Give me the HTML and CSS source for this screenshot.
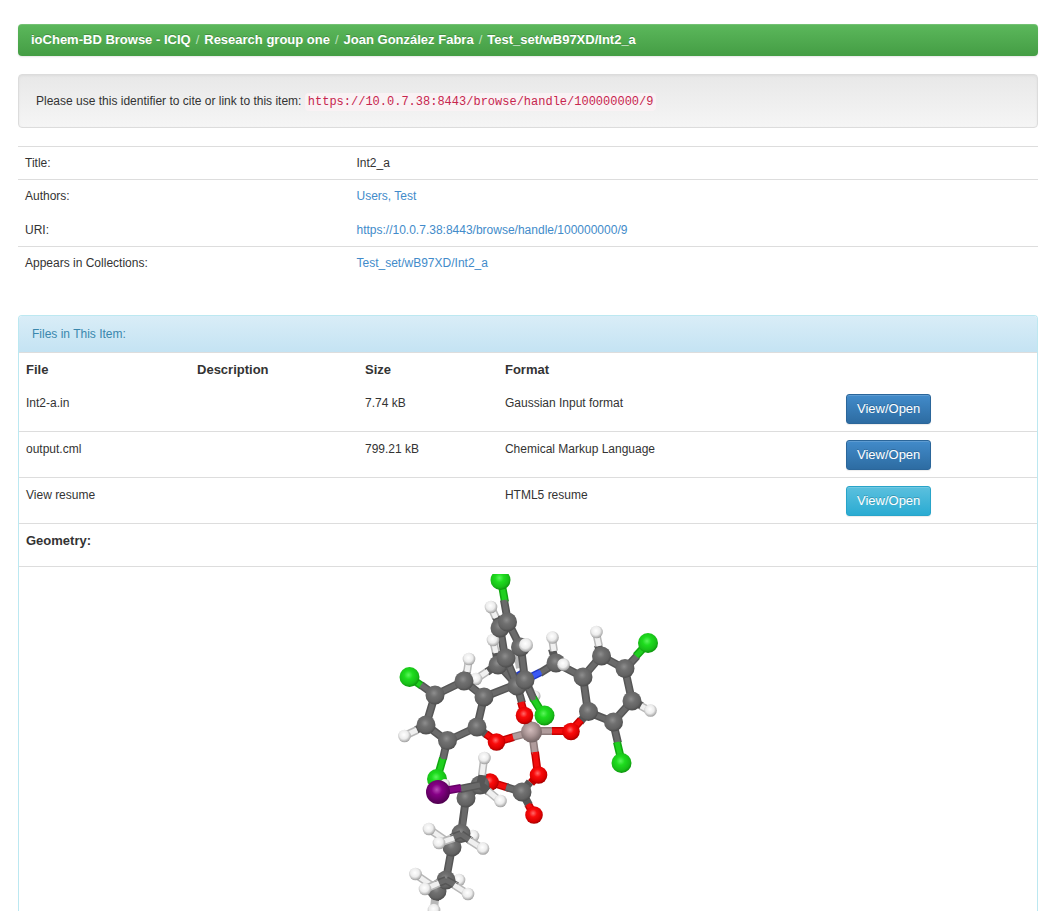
FILE: index.html
```html
<!DOCTYPE html>
<html lang="en">
<head>
<meta charset="utf-8">
<title>ioChem-BD Browse - Int2_a</title>
<link rel="stylesheet" href="styles.css">
</head>
<body>
<main class="page">
  <nav aria-label="Breadcrumb">
    <ol class="breadcrumb">
      <li><a href="#">ioChem-BD Browse - ICIQ</a></li>
      <li><a href="#">Research group one</a></li>
      <li><a href="#">Joan González Fabra</a></li>
      <li><a href="#">Test_set/wB97XD/Int2_a</a></li>
    </ol>
  </nav>

  <div class="well">Please use this identifier to cite or link to this item: <code>https://10.0.7.38:8443/browse/handle/100000000/9</code></div>

  <table class="table meta">
    <tbody>
      <tr><td class="label">Title:</td><td>Int2_a</td></tr>
      <tr><td class="label">Authors:</td><td><a href="#">Users, Test</a></td></tr>
      <tr class="plain"><td class="label">URI:</td><td><a href="#">https://10.0.7.38:8443/browse/handle/100000000/9</a></td></tr>
      <tr><td class="label">Appears in Collections:</td><td><a href="#">Test_set/wB97XD/Int2_a</a></td></tr>
    </tbody>
  </table>

  <section class="panel">
    <div class="panel-heading">Files in This Item:</div>
    <table class="table files">
      <colgroup><col class="col-file"><col class="col-desc"><col class="col-size"><col class="col-format"><col></colgroup>
      <tbody>
        <tr><th>File</th><th>Description</th><th>Size</th><th>Format</th><td></td></tr>
        <tr class="plain"><td>Int2-a.in</td><td></td><td>7.74 kB</td><td>Gaussian Input format</td><td><a class="btn primary" href="#">View/Open</a></td></tr>
        <tr><td>output.cml</td><td></td><td>799.21 kB</td><td>Chemical Markup Language</td><td><a class="btn primary" href="#">View/Open</a></td></tr>
        <tr><td>View resume</td><td></td><td></td><td>HTML5 resume</td><td><a class="btn info" href="#">View/Open</a></td></tr>
        <tr class="geometry"><th colspan="5">Geometry:</th></tr>
        <tr class="viewer"><td colspan="5">
          <svg class="molecule" viewBox="358 574 340 337" width="340" height="337" role="img" aria-label="Molecule geometry">
            <defs>
              <radialGradient id="gc" cx=".45" cy=".4" r=".62"><stop offset="0" stop-color="#8e8e8e"/><stop offset=".35" stop-color="#707070"/><stop offset=".75" stop-color="#626262"/><stop offset="1" stop-color="#484848"/></radialGradient>
              <radialGradient id="gh" cx=".45" cy=".4" r=".62"><stop offset="0" stop-color="#fff"/><stop offset=".55" stop-color="#ececec"/><stop offset="1" stop-color="#999"/></radialGradient>
              <radialGradient id="gl" cx=".45" cy=".4" r=".62"><stop offset="0" stop-color="#5cf55c"/><stop offset=".35" stop-color="#1edc1e"/><stop offset=".75" stop-color="#18be18"/><stop offset="1" stop-color="#0b8c0b"/></radialGradient>
              <radialGradient id="go" cx=".45" cy=".4" r=".62"><stop offset="0" stop-color="#ff6a6a"/><stop offset=".35" stop-color="#fa0c0c"/><stop offset=".75" stop-color="#dc0000"/><stop offset="1" stop-color="#9c0000"/></radialGradient>
              <radialGradient id="ga" cx=".45" cy=".4" r=".62"><stop offset="0" stop-color="#d2bcbc"/><stop offset=".5" stop-color="#a99494"/><stop offset="1" stop-color="#6f6060"/></radialGradient>
              <radialGradient id="gi" cx=".45" cy=".4" r=".62"><stop offset="0" stop-color="#b84cb8"/><stop offset=".35" stop-color="#850085"/><stop offset="1" stop-color="#4c004c"/></radialGradient>
              <g id="C"><circle r="9.5" fill="url(#gc)"/></g>
              <g id="H"><circle r="6.3" fill="url(#gh)"/></g>
              <g id="L"><circle r="10" fill="url(#gl)"/></g>
              <g id="O"><circle r="8.8" fill="url(#go)"/></g>
            </defs>

            <!-- rear atoms around the centre -->
            <g class="bond">
              <path class="w" d="M491 607L496 618M493 640L496 653M476 679L488 671M533 697L528 686M520 668L517 651"/>
              <path class="c" d="M496 617L500 627M496 652L498 664M487 672L498 664"/>
              <path class="c" d="M500 627L505 658M498 664L517 685"/>
              <path class="n" d="M517 672L523 682M531 677L541 672"/>
              <path class="c" d="M540 673L556 663"/>
            </g>
            <g class="shine">
              <path class="w" d="M491 607L496 618M493 640L496 653M476 679L488 671"/>
              <path class="c" d="M500 627L505 658M498 664L517 685M540 673L556 663"/>
              <path class="n" d="M531 677L541 672"/>
            </g>
            <circle cx="535" cy="696" r="5.5" fill="url(#gh)"/>
            <use href="#H" x="491" y="607"/><use href="#H" x="493" y="640"/>
            <use href="#C" x="500" y="628"/><use href="#C" x="498" y="665"/><use href="#H" x="476" y="679"/>

            <!-- left ring -->
            <g class="bond">
              <path class="l" d="M409 677L422 686"/><path class="c" d="M421 685L435 695L464 681L484 697L477 727L447 741L426 725L435 695M484 697L517 684M464 681L467 671M426 725L416 730M447 741L443 759M477 727L487 735"/>
              <path class="w" d="M469 659L467 672M404 736L417 730"/><path class="l" d="M443 758L437 779"/><path class="o" d="M486 734L497 742L514 737"/><path class="a" d="M513 737L532 732"/>
            </g>
            <g class="shine">
              <path class="l" d="M409 677L422 686M443 758L437 779"/><path class="c" d="M421 685L435 695L464 681L484 697L477 727L447 741L426 725L435 695M484 697L517 684M447 741L443 759"/>
              <path class="w" d="M469 659L467 672M404 736L417 730"/><path class="o" d="M486 734L497 742L514 737"/><path class="a" d="M513 737L532 732"/>
            </g>
            <use href="#L" x="409.5" y="677"/><use href="#C" x="435" y="695"/><use href="#C" x="464" y="681"/><use href="#H" x="469" y="659"/><use href="#C" x="484" y="697"/><use href="#C" x="477" y="727"/><use href="#C" x="447.5" y="740.5"/><use href="#C" x="426" y="725"/><use href="#H" x="404.5" y="736"/><use href="#O" x="496.5" y="742"/><use href="#L" x="437" y="779"/>

            <!-- right ring -->
            <g class="bond">
              <path class="c" d="M552 649L556 663L583 677L601 656L625 669L632 701L613 722L588 712L583 677M601 656L598 645M625 669L637 656M632 701L642 706M613 722L618 743M588 712L580 722"/>
              <path class="w" d="M552 638L554 651M596 632L599 646M650 711L641 706"/><path class="l" d="M648 643L636 656M622 763L617 742"/><path class="o" d="M581 720L571 731H551"/><path class="a" d="M552 731H532"/>
            </g>
            <g class="shine">
              <path class="c" d="M556 663L583 677L601 656L625 669L632 701L613 722L588 712L583 677M613 722L618 743M625 669L637 656"/>
              <path class="w" d="M552 638L554 651M596 632L599 646M650 711L641 706"/><path class="l" d="M648 643L636 656M622 763L617 742"/><path class="o" d="M581 720L571 731H551"/><path class="a" d="M552 731H532"/>
            </g>
            <use href="#C" x="556" y="663"/><use href="#H" x="552.5" y="637.5"/><use href="#H" x="563.5" y="664.5"/><use href="#C" x="583" y="677"/><use href="#C" x="601.5" y="656"/><use href="#H" x="596.5" y="632"/><use href="#C" x="625" y="668.5"/><use href="#L" x="648" y="643"/><use href="#C" x="632" y="701"/><use href="#H" x="650.5" y="710.5"/><use href="#C" x="613.5" y="722"/><use href="#L" x="621.5" y="763"/><use href="#C" x="588.5" y="711.5"/><use href="#O" x="571" y="731.5"/>

            <!-- upper ring and metal centre -->
            <g class="bond">
              <path class="l" d="M501 580L505 602"/><path class="c" d="M504 600L508 622L521 648L525 680M506 658L517 685L522 703M525 680L534 700"/><path class="o" d="M521 702L525 716L529 725"/><path class="l" d="M533 698L544 716"/><path class="a" d="M532 732L535 754"/><path class="o" d="M535 752L538 775L531 783M534 815L528 804M490 782L509 788"/><path class="c" d="M530 782L522 792L529 805M522 792L506 787"/>
            </g>
            <g class="shine">
              <path class="l" d="M501 580L505 602M533 698L544 716"/><path class="c" d="M504 600L508 622L521 648L525 680M506 658L517 685L522 703M525 680L534 700M522 792L506 787"/><path class="a" d="M532 732L535 754"/><path class="o" d="M521 702L525 716M535 752L538 775M490 782L506 787M534 815L528 804"/>
            </g>
            <use href="#L" x="500.5" y="580"/><use href="#C" x="507.5" y="622"/><use href="#C" x="506" y="658"/><use href="#C" x="520.5" y="647"/><circle cx="526" cy="645" r="7" fill="url(#gh)"/><use href="#C" x="517" y="686"/><use href="#C" x="525" y="680"/>
            <circle cx="531.5" cy="732" r="10.5" fill="url(#ga)"/><use href="#O" x="524.5" y="715.5"/><use href="#L" x="544.5" y="715.5"/><use href="#O" x="538.5" y="775"/><use href="#C" x="522" y="792"/><use href="#O" x="534" y="815"/><use href="#O" x="490" y="782"/>

            <!-- iodide and carbon chain -->
            <circle cx="445" cy="784" r="5" fill="url(#gh)"/>
            <g class="bond">
              <path class="w" d="M434 909L435 899M415 874L431 885M459 880L446 880M429 829L445 840M473 836L461 834"/>
              <path class="c" d="M480 785L466 798L461 834L452 847L446 880L437 893M431 883L437 892M445 838L452 847M435 900L437 892"/>
            </g>
            <g class="shine"><path class="w" d="M415 874L431 885M429 829L445 840"/><path class="c" d="M466 798L462 834M452 847L446 880"/></g>
            <use href="#H" x="415.5" y="874"/><use href="#H" x="429" y="829"/><use href="#H" x="473" y="836"/><use href="#H" x="459" y="880"/><use href="#H" x="434" y="910"/>
            <use href="#C" x="466" y="798"/><use href="#C" x="452" y="847"/><use href="#C" x="437" y="891"/>
            <use href="#C" x="461" y="833.5"/><use href="#C" x="446" y="880"/><use href="#C" x="480" y="785"/>
            <g class="bond">
              <path class="c" d="M480 785L460 789M480 785L483 773M480 785L489 792M461 834L451 838M461 834L471 841M446 880L436 884M446 880L457 886"/>
              <path class="i" d="M438 792L461 788"/><path class="w" d="M484 759L482 775M500 801L488 791M439 843L454 838M483 849L469 840M425 889L439 883M468 894L454 885"/>
            </g>
            <g class="shine"><path class="c" d="M480 785L460 789M461 834L451 838M461 834L471 841M446 880L436 884M446 880L457 886"/><path class="i" d="M438 792L461 788"/><path class="w" d="M484 759L482 775M500 801L488 791M439 843L454 838M483 849L469 840M425 889L439 883M468 894L454 885"/></g>
            <circle cx="438" cy="792" r="12" fill="url(#gi)"/>
            <use href="#H" x="484.5" y="758"/><use href="#H" x="500.5" y="801"/><use href="#H" x="439" y="843"/><use href="#H" x="483" y="848.5"/><use href="#H" x="425" y="889"/><use href="#H" x="468" y="894"/>
          </svg>
        </td></tr>
      </tbody>
    </table>
  </section>
</main>
</body>
</html>
```
FILE: styles.css
```css
* { box-sizing: border-box; }
body {
  margin: 0;
  background: #fff;
  color: #333;
  font: 12px/18px "Liberation Sans", Arial, sans-serif;
}
a { color: #428bca; text-decoration: none; }
.page { padding: 24px 10px 0 18px; }

.breadcrumb {
  display: flex;
  flex-wrap: wrap;
  margin: 0 0 18px;
  padding: 7px 13px;
  list-style: none;
  border-radius: 4px;
  background: linear-gradient(#5cb85c, #449d44);
  box-shadow: inset 0 1px 0 rgba(255, 255, 255, .15), 0 1px 2px rgba(0, 0, 0, .1);
  font-size: 13px;
}
.breadcrumb a { color: #fff; font-weight: bold; text-shadow: 0 -1px 0 rgba(0, 0, 0, .2); }
.breadcrumb li + li::before { content: "/"; padding: 0 5px; color: #bce0bc; }

.well {
  margin-bottom: 18px;
  padding: 17px;
  border: 1px solid #dcdcdc;
  border-radius: 4px;
  background: linear-gradient(#e8e8e8, #f5f5f5);
  box-shadow: inset 0 1px 3px rgba(0, 0, 0, .05);
}
code {
  padding: 2px 3px;
  border-radius: 4px;
  background: #f9f2f4;
  color: #c7254e;
  font: 12px/12px "Liberation Mono", "Courier New", monospace;
}

.table { width: 100%; border-collapse: separate; border-spacing: 0; table-layout: fixed; }
.table td, .table th {
  padding: 7px;
  border-top: 1px solid #ddd;
  text-align: left;
  vertical-align: top;
}
.table th { font-size: 13px; }
.table .plain td { border-top: 0; }
.meta { margin-bottom: 36px; }
.meta .plain td { padding: 9px 7px 7px; }
.meta .label { width: 32.5%; }

.panel {
  border: 1px solid #bce8f1;
  border-bottom: 0;
  border-radius: 4px 4px 0 0;
}
.panel-heading {
  padding: 9px 13px;
  border-radius: 3px 3px 0 0;
  background: linear-gradient(#d9edf7, #c4e3f3);
  color: #3a87ad;
}
.files td, .files th { padding-top: 8px; }
.col-file { width: 16.8%; }
.col-desc { width: 16.5%; }
.col-size { width: 13.75%; }
.col-format { width: 33.5%; }
.files .geometry th { padding-bottom: 16px; }
.files .viewer td { padding: 7px 7px 0; }

.btn {
  display: block;
  width: fit-content;
  padding: 5px 10px;
  border: 1px solid #2b669a;
  border-radius: 3px;
  color: #fff;
  font-size: 13px;
  text-shadow: 0 -1px 0 rgba(0, 0, 0, .2);
  box-shadow: inset 0 1px 0 rgba(255, 255, 255, .15), 0 1px 1px rgba(0, 0, 0, .08);
}
.primary { background: linear-gradient(#428bca, #2d6ca2); }
.info { border-color: #28a4c9; background: linear-gradient(#5bc0de, #2aabd2); }

.molecule { display: block; max-width: 100%; margin: 0 auto; }
.bond path, .shine path { fill: none; stroke-linejoin: round; }
.bond path { stroke-width: 8; }
.shine path { stroke-width: 5; }
.bond .c { stroke: #565656; }
.bond .w { stroke: #b8b8b8; }
.bond .l { stroke: #10a810; }
.bond .o { stroke: #c40000; }
.bond .a { stroke: #8d7b7b; }
.bond .n { stroke: #2038c8; }
.bond .i { stroke: #680068; }
.shine .c { stroke: #6a6a6a; }
.shine .w { stroke: #f0f0f0; }
.shine .l { stroke: #1fcf1f; }
.shine .o { stroke: #f20c0c; }
.shine .a { stroke: #b09c9c; }
.shine .n { stroke: #3a58f4; }
.shine .i { stroke: #820482; }
```
